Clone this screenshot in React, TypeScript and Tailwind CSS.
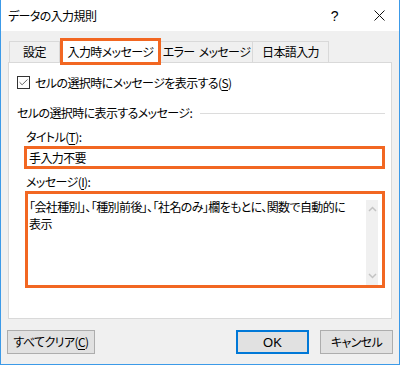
import { Check } from "lucide-react";

const jp = "font-['Noto_Sans_CJK_JP',sans-serif] [font-feature-settings:'palt'] text-[12px] tracking-[-0.6px] text-black";

const Mn = ({ c }: { c: string }) => (
  <>
    (<span className="underline underline-offset-2">{c}</span>)
  </>
);

const Arrow = ({ up }: { up?: boolean }) => (
  <svg width="9" height="6" viewBox="0 0 9 6" className="text-[#c3c3c3]">
    <path d={up ? "M1 5 L4.5 1.5 L8 5" : "M1 1 L4.5 4.5 L8 1"} fill="none" stroke="currentColor" strokeWidth="1.5" />
  </svg>
);

export default function App() {
  return (
    <div className={`${jp} w-[400px] h-[365px] flex flex-col border border-[#3c9ae8] border-t-0 bg-[#f0f0f0] leading-none`}>
      {/* title bar */}
      <div className="h-[31px] bg-white flex items-center pl-[7px] pr-[14px] -mx-px border-x border-[#3c9ae8]">
        <span className="text-[12px]">データの入力規則</span>
        <span className="ml-auto mr-[36px] font-['Liberation_Sans',sans-serif] text-[14px]">?</span>
        <svg width="11" height="11" viewBox="0 0 11 11">
          <path d="M0.5 0.5 L10.5 10.5 M10.5 0.5 L0.5 10.5" stroke="#111" strokeWidth="1" />
        </svg>
      </div>

      {/* tabs */}
      <div className="px-[7px] pt-[7px]">
        <div className="flex items-end h-[24px] pl-px whitespace-nowrap">
          <div className="h-[21px] w-[51px] border border-b-0 border-[#d9d9d9] flex items-center justify-center">設定</div>
          <div className="relative z-10 -mb-[3px] h-[27px] w-[101px] border-[3px] border-[#f26722] bg-white flex items-center justify-center">
            入力時メッセージ
          </div>
          <div className="h-[21px] w-[92px] border-t border-r border-[#d9d9d9] flex items-center justify-center gap-[4px]">
            <span>エラー</span>
            <span>メッセージ</span>
          </div>
          <div className="h-[21px] w-[76px] border-t border-r border-[#d9d9d9] flex items-center justify-center">日本語入力</div>
        </div>

        {/* panel */}
        <div className="h-[257px] border border-[#d9d9d9] bg-white pl-[8px] pr-[6px] pt-[13px]">
          <div className="flex items-center gap-[5px]">
            <div className="w-[13px] h-[13px] border border-[#333] flex items-center justify-center">
              <Check size={11} strokeWidth={1.5} color="#222" />
            </div>
            <span>
              セルの選択時にメッセージを表示する<Mn c="S" />
            </span>
          </div>

          <div className="flex items-center gap-[8px] mt-[18px]">
            <span className="whitespace-nowrap">セルの選択時に表示するメッセージ:</span>
            <div className="flex-1 h-px bg-[#dcdcdc]" />
          </div>

          <div className="mt-[12px] pl-[9px]">
            タイトル<Mn c="T" />:
          </div>
          <div className="mt-[3px] ml-[7px] h-[23px] border-[3px] border-[#f26722] flex items-center pl-[2px]">手入力不要</div>

          <div className="mt-[7px] pl-[9px]">
            メッセージ<Mn c="I" />:
          </div>
          <div className="mt-[3px] ml-[8px] h-[97px] border-[3px] border-[#f26722] flex pl-px pt-[4px] pr-[4px]">
            <div className="flex-1 leading-[17px] whitespace-nowrap">
              「会社種別」、「種別前後」、「社名のみ」欄をもとに、関数で自動的に
              <br />
              表示
            </div>
            <div className="w-[12px] mt-[2px] bg-[#f0f0f0] flex flex-col items-center justify-between py-[6px]">
              <Arrow up />
              <Arrow />
            </div>
          </div>
        </div>
      </div>

      {/* buttons */}
      <div className="flex items-center px-[6px] mt-[11px]">
        <button className="h-[24px] w-[88px] border border-[#adadad] bg-[#e1e1e1]">
          すべてクリア<Mn c="C" />
        </button>
        <button className="ml-auto h-[24px] w-[73px] border-2 border-[#0078d7] bg-[#e1e1e1] font-['Liberation_Sans',sans-serif] text-[13px] tracking-normal">
          OK
        </button>
        <button className="ml-[11px] h-[24px] w-[73px] border border-[#adadad] bg-[#e1e1e1]">キャンセル</button>
      </div>
    </div>
  );
}
